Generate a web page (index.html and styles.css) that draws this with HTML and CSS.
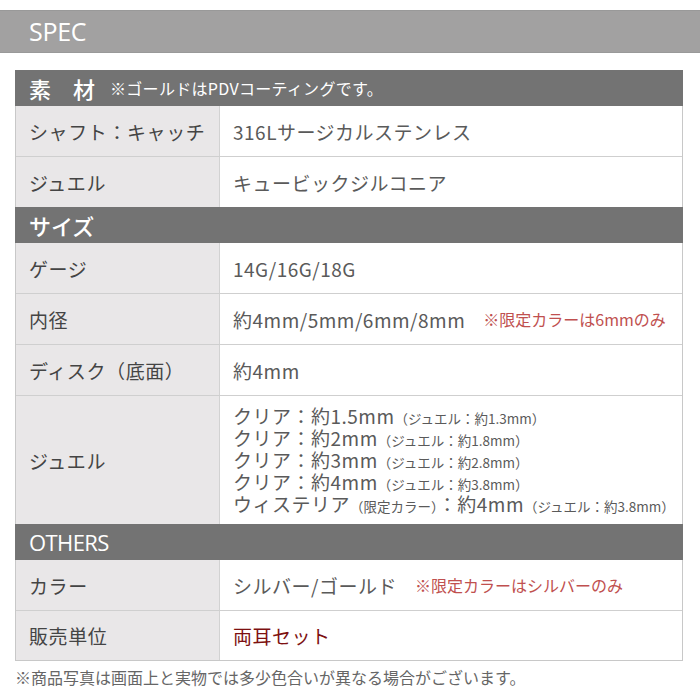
FILE: index.html
```html
<!DOCTYPE html>
<html lang="ja">
<head>
<meta charset="utf-8">
<link rel="stylesheet" href="styles.css">
</head>
<body>
<div class="spec-bar"><span class="spec-title">SPEC</span></div>
<div class="wrap">
  <div class="table">
    <div class="sec-head"><span class="sec-big">素　材</span><span class="sec-note">※ゴールドはPDVコーティングです。</span></div>
    <div class="row">
      <div class="label">シャフト：キャッチ</div>
      <div class="value">316Lサージカルステンレス</div>
    </div>
    <div class="row no-line">
      <div class="label">ジュエル</div>
      <div class="value">キュービックジルコニア</div>
    </div>
    <div class="sec-head"><span class="sec-big">サイズ</span></div>
    <div class="row">
      <div class="label">ゲージ</div>
      <div class="value">14G/16G/18G</div>
    </div>
    <div class="row">
      <div class="label">内径</div>
      <div class="value">約4mm/5mm/6mm/8mm<span class="red-note">※限定カラーは6mmのみ</span></div>
    </div>
    <div class="row">
      <div class="label">ディスク（底面）</div>
      <div class="value">約4mm</div>
    </div>
    <div class="row tall no-line">
      <div class="label">ジュエル</div>
      <div class="value lines">
        <div class="line">クリア：約1.5mm<small>（ジュエル：約1.3mm）</small></div>
        <div class="line">クリア：約2mm<small>（ジュエル：約1.8mm）</small></div>
        <div class="line">クリア：約3mm<small>（ジュエル：約2.8mm）</small></div>
        <div class="line">クリア：約4mm<small>（ジュエル：約3.8mm）</small></div>
        <div class="line">ウィステリア<small>（限定カラー）</small>：約4mm<small>（ジュエル：約3.8mm）</small></div>
      </div>
    </div>
    <div class="sec-head"><span class="sec-big latin">OTHERS</span></div>
    <div class="row">
      <div class="label">カラー</div>
      <div class="value">シルバー/ゴールド<span class="red-note">※限定カラーはシルバーのみ</span></div>
    </div>
    <div class="row last">
      <div class="label">販売単位</div>
      <div class="value dark-red">両耳セット</div>
    </div>
  </div>
  <p class="footnote">※商品写真は画面上と実物では多少色合いが異なる場合がございます。</p>
</div>
</body>
</html>
```
FILE: styles.css
```css
* { box-sizing: border-box; }
html, body { margin: 0; padding: 0; background: #fff; }
body {
  font-family: "Noto Sans CJK JP", "Noto Sans", sans-serif;
  color: #444;
  width: 700px;
}
.spec-bar {
  margin-top: 10px;
  height: 43px;
  background: #a2a1a1;
  border-top: 1px solid #999;
  border-bottom: 1px solid #999;
  display: flex;
  align-items: center;
  padding-left: 29px;
}
.spec-title {
  font-family: "Open Sans", "Noto Sans", sans-serif;
  color: #fff;
  font-size: 25px;
  letter-spacing: -0.3px;
  line-height: 1;
}
.wrap { padding: 17px 17px 0 15px; }
.table {
  border-left: 1px solid #c8c8c8;
  border-right: 1px solid #c8c8c8;
  border-bottom: 1px solid #c8c8c8;
}
.sec-head {
  height: 36px;
  background: #737373;
  color: #fff;
  display: flex;
  align-items: center;
  margin: 0 -1px;
  padding-left: 14px;
}
.sec-big {
  font-size: 22px;
  font-weight: 500;
  line-height: 1;
}
.sec-big.latin {
  font-family: "Open Sans", "Noto Sans", sans-serif;
  font-weight: 400;
  letter-spacing: -0.6px;
}
.sec-note {
  font-size: 16px;
  margin-left: 15px;
  line-height: 1;
  letter-spacing: 0.3px;
}
.row {
  display: flex;
  height: 51px;
  border-bottom: 1px solid #cfcfcf;
}
.row.no-line { border-bottom: none; height: 50px; }
.row.last { border-bottom: none; height: 49px; }
.row.tall { height: 128px; }
.label {
  width: 204px;
  flex: none;
  background: #e9e7e8;
  border-right: 1px solid #d2d2d2;
  display: flex;
  align-items: center;
  padding-left: 13px;
  font-size: 19px;
  letter-spacing: 0.6px;
  color: #444;
  white-space: nowrap;
}
.value {
  flex: 1;
  display: flex;
  align-items: center;
  padding-left: 13px;
  font-size: 19px;
  letter-spacing: 0.5px;
  color: #5a5a5a;
  white-space: nowrap;
}
.value.lines {
  flex-direction: column;
  align-items: flex-start;
  justify-content: center;
}
.line {
  height: 22px;
  line-height: 22px;
}
.value small {
  font-size: 13.5px;
  line-height: 1;
  letter-spacing: 0;
}
.red-note {
  color: #c0504f;
  font-size: 16px;
  margin-left: 18px;
  letter-spacing: 0;
}
.dark-red { color: #7d1010; }
.footnote {
  margin: 5px 0 0 0;
  font-size: 16px;
  color: #666;
  line-height: 22px;
}
```
